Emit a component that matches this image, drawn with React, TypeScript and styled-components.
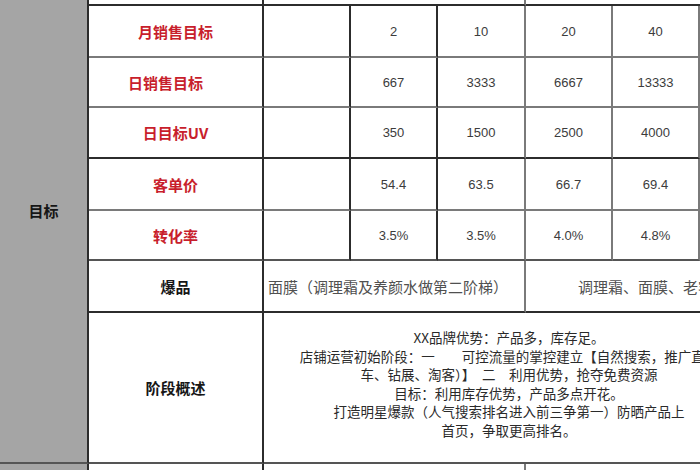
import React from "react";
import styled, { createGlobalStyle } from "styled-components";

const DARK = "#2c2c2c";
const MIDDARK = "#555555";
const MID = "#7a7a7a";

const Global = createGlobalStyle`
  html, body {
    margin: 0;
    padding: 0;
    width: 700px;
    height: 470px;
    overflow: hidden;
    background: #ffffff;
  }
  #root {
    width: 700px;
    height: 470px;
    overflow: hidden;
  }
`;

const Sheet = styled.div`
  display: grid;
  grid-template-columns: 89px 175px 87px 87px 88px 87px 87px 56px;
  grid-template-rows: 48px 52px 50px 51px 52px 50px 52px 151px 40px;
  width: 756px;
  margin-top: -42px;
  font-family: "Noto Sans CJK SC", "Noto Sans", sans-serif;
`;

const Cell = styled.div<{ $col?: string; $r?: string; $b?: string }>`
  box-sizing: border-box;
  grid-column: ${(p) => p.$col ?? "auto"};
  border-right: 2px solid ${(p) => p.$r ?? "transparent"};
  border-bottom: 2px solid ${(p) => p.$b ?? MID};
  background: #ffffff;
  display: flex;
  align-items: center;
  justify-content: center;
  overflow: hidden;
  white-space: nowrap;
  min-width: 0;
`;

const GroupCell = styled(Cell)<{ $rows: string }>`
  grid-row: ${(p) => p.$rows};
  background: #a5a5a5;
  font-size: 15px;
  font-weight: 700;
  color: #161616;
`;

const Label = styled(Cell)<{ $tone: "red" | "black"; $shift?: number }>`
  font-size: 15px;
  font-weight: 700;
  color: ${(p) => (p.$tone === "red" ? "#c81e2c" : "#161616")};
  padding-right: ${(p) => p.$shift ?? 0}px;
`;

const Value = styled(Cell)`
  font-family: "Liberation Sans", Arial, sans-serif;
  font-size: 13px;
  color: #3c3c3c;
`;

const ProductCell = styled(Cell)<{ $pad: number }>`
  justify-content: flex-start;
  padding-left: ${(p) => p.$pad}px;
  font-size: 15px;
  color: #505050;
`;

const Description = styled(Cell)`
  flex-direction: column;
  padding-bottom: 8px;
  font-size: 13.5px;
  line-height: 18.5px;
  color: #2a2a2a;
`;

const Line = styled.div`
  white-space: nowrap;
`;

type Row = {
  label: string;
  values: string[];
  line: string;
  shift?: number;
};

const rows: Row[] = [
  { label: "月销售目标", values: ["2", "10", "20", "40"], line: MID },
  { label: "日销售目标", values: ["667", "3333", "6667", "13333"], line: MID, shift: 20 },
  { label: "日目标UV", values: ["350", "1500", "2500", "4000"], line: DARK },
  { label: "客单价", values: ["54.4", "63.5", "66.7", "69.4"], line: MID },
  { label: "转化率", values: ["3.5%", "3.5%", "4.0%", "4.8%"], line: MIDDARK },
];

const valueBorders = [DARK, MID, MID, MID];

const description = [
  "XX品牌优势：产品多，库存足。",
  "店铺运营初始阶段：一　　可控流量的掌控建立【自然搜索，推广直通",
  "车、钻展、淘客）】　二　利用优势，抢夺免费资源",
  "目标：利用库存优势，产品多点开花。",
  "打造明星爆款（人气搜索排名进入前三争第一）防晒产品上",
  "首页，争取更高排名。",
];

export default function App() {
  return (
    <>
      <Global />
      <Sheet>
        <GroupCell $col="1" $rows="1 / 9" $r={DARK} $b={MIDDARK}>
          目标
        </GroupCell>

        <Cell $col="2" $r={DARK} $b={DARK} />
        <Cell $col="3 / 6" $r={MID} $b={DARK} />
        <Cell $col="6 / 9" $b={DARK} />

        {rows.map((row) => (
          <React.Fragment key={row.label}>
            <Label $col="2" $tone="red" $shift={row.shift} $r={DARK} $b={row.line}>
              {row.label}
            </Label>
            <Cell $col="3" $r={DARK} $b={row.line} />
            {row.values.map((v, i) => (
              <Value key={i} $col={String(4 + i)} $r={valueBorders[i]} $b={row.line}>
                {v}
              </Value>
            ))}
            <Cell $col="8" $b={row.line} />
          </React.Fragment>
        ))}

        <Label $col="2" $tone="black" $r={DARK} $b={DARK}>
          爆品
        </Label>
        <ProductCell $col="3 / 6" $pad={4} $r={MID} $b={DARK}>
          面膜（调理霜及养颜水做第二阶梯）
        </ProductCell>
        <ProductCell $col="6 / 9" $pad={52} $b={DARK}>
          调理霜、面膜、老客户回购
        </ProductCell>

        <Label $col="2" $tone="black" $r={DARK} $b={MIDDARK}>
          阶段概述
        </Label>
        <Description $col="3 / 9" $b={MIDDARK}>
          {description.map((l) => (
            <Line key={l}>{l}</Line>
          ))}
        </Description>

        <GroupCell $col="1" $rows="9" $r={DARK} $b="transparent" />
        <Cell $col="2" $r={DARK} $b="transparent" />
        <Cell $col="3 / 6" $r={MID} $b="transparent" />
        <Cell $col="6 / 9" $b="transparent" />
      </Sheet>
    </>
  );
}
